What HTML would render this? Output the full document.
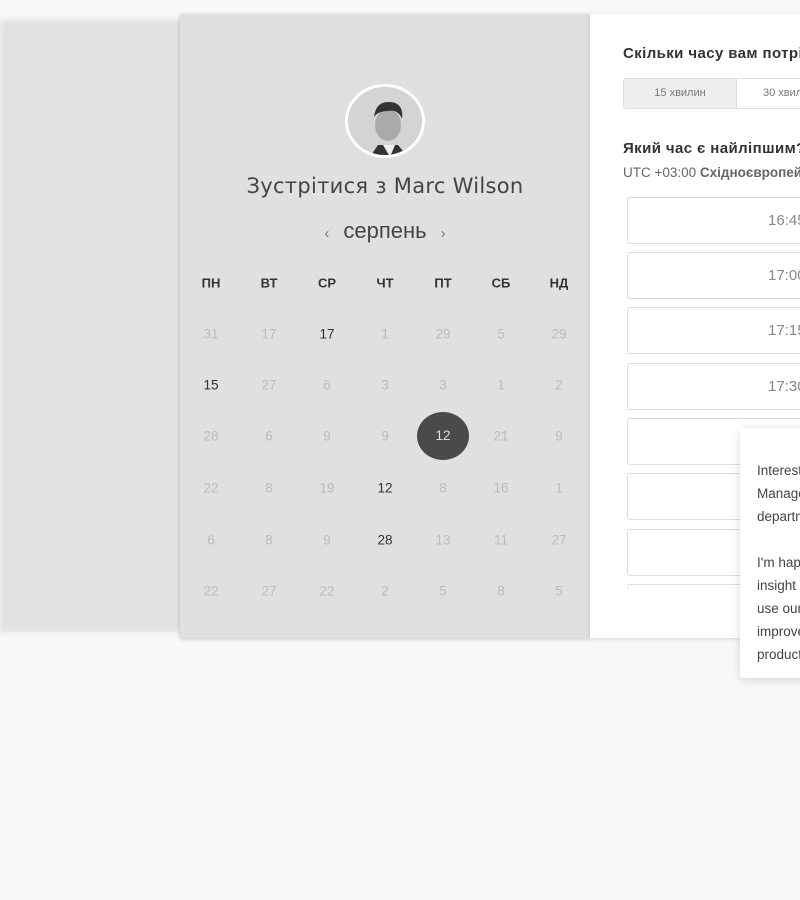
<!DOCTYPE html>
<html><head><meta charset="utf-8"><style>
*{margin:0;padding:0;box-sizing:border-box}
body{width:800px;height:900px;background:#f8f8f8;position:relative;overflow:hidden;font-family:"Liberation Sans",sans-serif}
.bg{position:absolute;left:0;top:20px;width:200px;height:612px;background:#e1e1e1;filter:blur(3px)}
.card{position:absolute;left:180px;top:14px;width:410px;height:624px;background:#e0e0e0;box-shadow:0 1px 4px rgba(0,0,0,.2)}
.right{position:absolute;left:590px;top:14px;width:220px;height:624px;background:#fff;box-shadow:0 1px 4px rgba(0,0,0,.15);overflow:hidden}
.av{position:absolute;left:165px;top:70px;width:80px;height:74px;border-radius:50%;border:3px solid #fff;background:#bbb;overflow:hidden}
.t{position:absolute;left:0;width:410px;text-align:center;color:#444}
.c{position:absolute;width:40px;text-align:center;font-size:13.5px;color:#bbb;transform:translate(-50%,-50%)}
.c.d{color:#333}
.h{font-weight:bold;color:#333;font-size:13px}
.sel{width:52px;height:48px;line-height:48px;border-radius:50%;background:#4a4a4a;color:#ddd}
.slot{position:absolute;left:37px;width:200px;height:47px;border:1px solid #ddd;border-radius:3px;color:#888;font-size:15px;line-height:45px;padding-left:140px}
.pop{position:absolute;left:740px;top:428px;width:80px;height:250px;background:#fff;border-radius:3px;box-shadow:0 2px 10px rgba(0,0,0,.15);font-size:13.5px;color:#444;padding:31px 0 0 17px;line-height:23px;white-space:nowrap}
</style></head><body>
<div class="bg"></div>
<div class="card">
<div class="av"><svg width="80" height="80" viewBox="0 0 80 80"><rect width="80" height="80" fill="#d4d4d4"/><path d="M15 80 L30 58 L50 58 L68 80Z" fill="#333"/><path d="M35 58 L42 70 L47 58Z" fill="#eee"/><ellipse cx="40" cy="38" rx="13" ry="16" fill="#aaa"/><path d="M26 30 Q28 14 42 15 Q56 16 54 32 Q50 22 40 24 Q30 24 26 30Z" fill="#333"/></svg></div>
<div class="t" style="top:160px;font-size:21px;font-family:'DejaVu Sans',sans-serif;letter-spacing:0.3px">Зустрітися з Marc Wilson</div>
<div class="t" style="top:204px;font-size:22px"><span style="font-size:15px;color:#777;margin-right:14px">‹</span>серпень<span style="font-size:15px;color:#777;margin-left:14px">›</span></div>
</div>
<div id="g"></div>
<div class="right">
<div style="position:absolute;left:33px;top:31px;font-size:15px;font-weight:bold;color:#333;white-space:nowrap;letter-spacing:0.4px">Скільки часу вам потрібно?</div>
<div style="position:absolute;left:33px;top:64px;width:220px;height:31px;border:1px solid #ddd;border-radius:3px;font-size:11px;color:#777;display:flex">
<div style="width:113px;background:#efefef;text-align:center;line-height:29px;border-right:1px solid #ddd">15 хвилин</div><div style="flex:1;line-height:29px;padding-left:26px">30 хвилин</div></div>
<div style="position:absolute;left:33px;top:126px;font-size:15px;font-weight:bold;color:#333;white-space:nowrap;letter-spacing:0.4px">Який час є найліпшим?</div>
<div style="position:absolute;left:33px;top:151px;font-size:13.5px;color:#666;white-space:nowrap">UTC +03:00 <b>Східноєвропейський</b></div>
<div class="slot" style="top:183px">16:45</div>
<div class="slot" style="top:238px">17:00</div>
<div class="slot" style="top:293px">17:15</div>
<div class="slot" style="top:349px">17:30</div>
<div class="slot" style="top:404px"></div>
<div class="slot" style="top:459px"></div>
<div class="slot" style="top:515px"></div>
<div class="slot" style="top:570px;height:6px;border-bottom:none"></div>
</div>
<div class="pop">Interested<br>Management<br>department<br><br>I'm happy<br>insight<br>use our<br>improve<br>products</div>
<script>
var cols=[211,269,327,385,443,501,559],rows=[334,385,436,488,540,591];
var h=["ПН","ВТ","СР","ЧТ","ПТ","СБ","НД"];
var d=[[31,17,"*17",1,29,5,29],["*15",27,6,3,3,1,2],[28,6,9,9,"#12",21,9],[22,8,19,"*12",8,16,1],[6,8,9,"*28",13,11,27],[22,27,22,2,5,8,5]];
var s="";
h.forEach(function(x,i){s+='<div class="c h" style="left:'+cols[i]+'px;top:283px">'+x+'</div>'});
d.forEach(function(r,j){r.forEach(function(v,i){v=String(v);var cl="c";if(v[0]=="*"){cl+=" d";v=v.slice(1)}else if(v[0]=="#"){cl+=" sel";v=v.slice(1)}s+='<div class="'+cl+'" style="left:'+cols[i]+'px;top:'+rows[j]+'px">'+v+'</div>'})});
document.getElementById("g").innerHTML=s;
</script>
</body></html>
